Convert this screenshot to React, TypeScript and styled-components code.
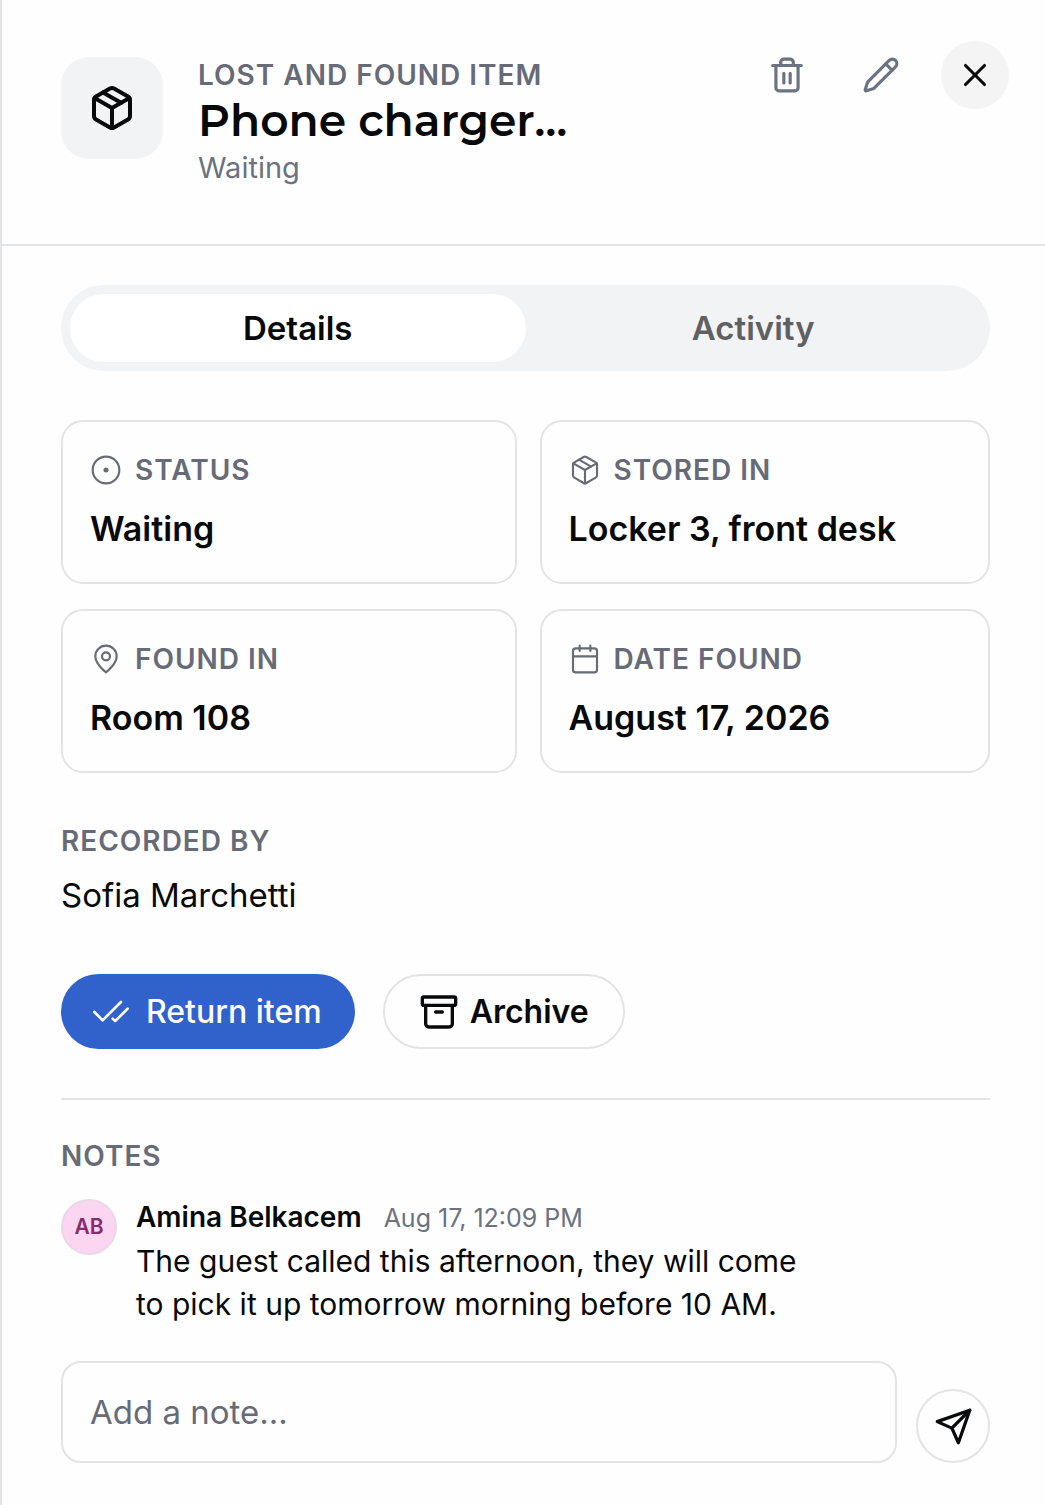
import React, { useState } from 'react'
import styled, { createGlobalStyle } from 'styled-components'
import { Archive, Calendar, CheckCheck, Package, Pencil, Trash2, X } from 'lucide-react'

const Colors = {
  page: '#fefefe',
  ink: '#08090a',
  label: '#676b77',
  muted: '#6b7280',
  tab: '#5f6062',
  line: '#e3e4e6',
  fill: '#f2f3f5',
  blue: '#3162cc',
}

type TabName = 'Details' | 'Activity'

const tabs: TabName[] = ['Details', 'Activity']

const StatusIcon = () => (
  <svg width="32" height="32" viewBox="0 0 24 24" fill="none" stroke="currentColor" strokeWidth="1.6" aria-hidden="true">
    <circle cx="12" cy="12" r="10" />
    <circle cx="12" cy="12" r="1.9" fill="currentColor" stroke="none" />
  </svg>
)

const PinIcon = () => (
  <svg width="32" height="32" viewBox="0 0 24 24" fill="none" stroke="currentColor" strokeWidth="1.6" strokeLinecap="round" strokeLinejoin="round" aria-hidden="true">
    <path d="M20 10c0 6-8 12-8 12s-8-6-8-12a8 8 0 0 1 16 0Z" />
    <circle cx="12" cy="10" r="3" />
  </svg>
)

const SendIcon = () => (
  <svg width="39" height="39" viewBox="0 0 24 24" fill="none" stroke="currentColor" strokeWidth="2" strokeLinecap="round" strokeLinejoin="round" aria-hidden="true">
    <path d="m22 2-7 20-4-9-9-4Z" />
    <path d="M22 2 11 13" />
  </svg>
)

const facts = [
  { label: 'Status', value: 'Waiting', icon: <StatusIcon /> },
  { label: 'Stored in', value: 'Locker 3, front desk', icon: <Package size={32} strokeWidth={1.6} /> },
  { label: 'Found in', value: 'Room 108', icon: <PinIcon /> },
  { label: 'Date found', value: 'August 17, 2026', icon: <Calendar size={32} strokeWidth={1.6} /> },
]

export default function App() {
  const [tab, setTab] = useState<TabName>('Details')
  const [note, setNote] = useState('')

  return (
    <Panel>
      <GlobalStyle />
      <Header>
        <Identity>
          <ItemIcon>
            <Package size={48} strokeWidth={2} />
          </ItemIcon>
          <div>
            <Eyebrow>Lost and found item</Eyebrow>
            <Title>Phone charger…</Title>
            <Subtitle>Waiting</Subtitle>
          </div>
        </Identity>
        <Actions>
          <IconButton type="button" aria-label="Delete">
            <Trash2 size={38} strokeWidth={2} />
          </IconButton>
          <IconButton type="button" aria-label="Edit">
            <Pencil size={38} strokeWidth={2} />
          </IconButton>
          <IconButton type="button" aria-label="Close" $filled>
            <X size={38} strokeWidth={2} />
          </IconButton>
        </Actions>
      </Header>

      <Body>
        <Tabs role="tablist">
          {tabs.map((name) => (
            <Tab key={name} type="button" role="tab" aria-selected={tab === name} $active={tab === name} onClick={() => setTab(name)}>
              {name}
            </Tab>
          ))}
        </Tabs>

        <Facts>
          {facts.map((fact) => (
            <Card key={fact.label}>
              <CardLabel>
                {fact.icon}
                {fact.label}
              </CardLabel>
              <CardValue>{fact.value}</CardValue>
            </Card>
          ))}
        </Facts>

        <Recorded>
          <Label>Recorded by</Label>
          <Person>Sofia Marchetti</Person>
        </Recorded>

        <Buttons>
          <PrimaryButton type="button">
            <CheckCheck size={40} strokeWidth={1.6} />
            Return item
          </PrimaryButton>
          <OutlineButton type="button">
            <Archive size={40} strokeWidth={2} />
            Archive
          </OutlineButton>
        </Buttons>

        <Notes>
          <Label>Notes</Label>
          <Note>
            <Avatar>AB</Avatar>
            <NoteContent>
              <NoteHead>
                <Author>Amina Belkacem</Author>
                <Time>Aug 17, 12:09 PM</Time>
              </NoteHead>
              <NoteText>The guest called this afternoon, they will come to pick it up tomorrow morning before 10 AM.</NoteText>
            </NoteContent>
          </Note>
          <Composer onSubmit={(e) => e.preventDefault()}>
            <NoteInput
              aria-label="Add a note"
              placeholder="Add a note..."
              value={note}
              onChange={(e) => setNote(e.target.value)}
            />
            <SendButton type="submit" aria-label="Send note">
              <SendIcon />
            </SendButton>
          </Composer>
        </Notes>
      </Body>
    </Panel>
  )
}

const GlobalStyle = createGlobalStyle`
  *, *::before, *::after {
    box-sizing: border-box;
  }

  body {
    margin: 0;
    background: ${Colors.page};
    color: ${Colors.ink};
    font-family: Inter, 'Liberation Sans', sans-serif;
  }

  h1, h2, p {
    margin: 0;
  }

  button, input {
    font-family: inherit;
  }

  button {
    cursor: pointer;
  }

  svg {
    flex-shrink: 0;
  }
`

const Panel = styled.main`
  min-height: 100vh;
  border-left: 2px solid ${Colors.line};
`

const Header = styled.header`
  display: flex;
  justify-content: space-between;
  align-items: flex-start;
  padding: 41px 36px 55px 59px;
  border-bottom: 2px solid ${Colors.line};
`

const Identity = styled.div`
  display: flex;
  align-items: flex-start;
  gap: 35px;
  padding-top: 16px;
`

const ItemIcon = styled.div`
  display: grid;
  place-items: center;
  width: 102px;
  height: 102px;
  border-radius: 28px;
  background: ${Colors.fill};
`

const Label = styled.h2`
  font-size: 28px;
  line-height: 36px;
  font-weight: 600;
  letter-spacing: 1px;
  text-transform: uppercase;
  color: ${Colors.label};
`

const Eyebrow = styled(Label).attrs({ as: 'p' })``

const Title = styled.h1`
  font-family: Montserrat, Inter, sans-serif;
  font-size: 44px;
  line-height: 54px;
  font-weight: 600;
`

const Subtitle = styled.p`
  font-size: 29px;
  line-height: 42px;
  color: ${Colors.muted};
`

const Actions = styled.div`
  display: flex;
  gap: 26px;
`

const IconButton = styled.button<{ $filled?: boolean }>`
  display: grid;
  place-items: center;
  width: 68px;
  height: 68px;
  padding: 0;
  border: 0;
  border-radius: 50%;
  background: ${(p) => (p.$filled ? '#f4f4f5' : 'transparent')};
  color: ${(p) => (p.$filled ? Colors.ink : Colors.muted)};
`

const Body = styled.div`
  padding: 39px 55px 40px 59px;
`

const Tabs = styled.div`
  display: grid;
  grid-template-columns: 1fr 1fr;
  padding: 9px;
  border-radius: 43px;
  background: ${Colors.fill};
`

const Tab = styled.button<{ $active: boolean }>`
  height: 68px;
  border: 0;
  border-radius: 34px;
  background: ${(p) => (p.$active ? '#fff' : 'transparent')};
  color: ${(p) => (p.$active ? Colors.ink : Colors.tab)};
  font-size: 33px;
  line-height: 44px;
  font-weight: 600;
`

const Facts = styled.section`
  display: grid;
  grid-template-columns: 455fr 450fr;
  gap: 25px 23px;
  margin-top: 49px;
`

const Card = styled.div`
  display: flex;
  flex-direction: column;
  gap: 19px;
  padding: 30px 27px 31px;
  border: 2px solid ${Colors.line};
  border-radius: 22px;
`

const CardLabel = styled(Label)`
  display: flex;
  align-items: center;
  gap: 13px;
`

const CardValue = styled.p`
  font-size: 34px;
  line-height: 44px;
  font-weight: 600;
`

const Recorded = styled.section`
  margin-top: 50px;
`

const Person = styled.p`
  margin-top: 14px;
  font-size: 33px;
  line-height: 44px;
`

const Buttons = styled.div`
  display: flex;
  gap: 28px;
  margin-top: 57px;
`

const PillButton = styled.button`
  display: flex;
  align-items: center;
  height: 75px;
  border-radius: 38px;
  font-size: 32px;
  line-height: 44px;
  font-weight: 600;
`

const PrimaryButton = styled(PillButton)`
  gap: 15px;
  padding: 0 33px 0 30px;
  border: 0;
  background: ${Colors.blue};
  color: #fff;
  font-weight: 500;
`

const OutlineButton = styled(PillButton)`
  gap: 11px;
  padding: 0 34px;
  border: 2px solid ${Colors.line};
  background: transparent;
  color: ${Colors.ink};
`

const Notes = styled.section`
  margin-top: 49px;
  padding-top: 38px;
  border-top: 2px solid ${Colors.line};
`

const Note = styled.article`
  display: flex;
  gap: 19px;
  margin-top: 22px;
`

const Avatar = styled.div`
  display: grid;
  place-items: center;
  flex-shrink: 0;
  width: 56px;
  height: 56px;
  margin-top: 3px;
  border: 2px solid #e9d8e8;
  border-radius: 50%;
  background: #fcd5f0;
  color: #862c6c;
  font-size: 21px;
  line-height: 28px;
  font-weight: 600;
`

const NoteContent = styled.div`
  max-width: 680px;
`

const NoteHead = styled.div`
  display: flex;
  align-items: baseline;
  gap: 22px;
`

const Author = styled.span`
  font-size: 28px;
  line-height: 43px;
  font-weight: 600;
`

const Time = styled.time`
  font-size: 25px;
  line-height: 43px;
  color: ${Colors.muted};
`

const NoteText = styled.p`
  font-size: 30px;
  line-height: 43px;
`

const Composer = styled.form`
  display: flex;
  align-items: flex-end;
  gap: 19px;
  margin-top: 35px;
`

const NoteInput = styled.input`
  flex: 1;
  min-width: 0;
  height: 102px;
  padding: 0 27px;
  border: 2px solid ${Colors.line};
  border-radius: 20px;
  background: transparent;
  color: ${Colors.ink};
  font-size: 33px;
  line-height: 44px;

  &::placeholder {
    color: ${Colors.label};
    opacity: 1;
  }
`

const SendButton = styled.button`
  display: grid;
  place-items: center;
  width: 74px;
  height: 74px;
  padding: 0;
  border: 2px solid ${Colors.line};
  border-radius: 50%;
  background: transparent;
  color: ${Colors.ink};
`
